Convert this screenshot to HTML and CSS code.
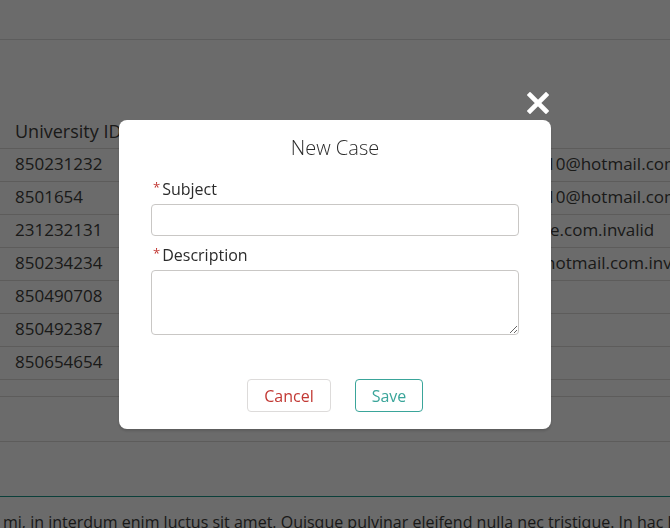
FILE: index.html
```html
<!DOCTYPE html>
<html lang="en">
<head>
<meta charset="utf-8">
<title>New Case</title>
<link rel="stylesheet" href="styles.css">
</head>
<body>
<div class="page">
  <header class="topbar"></header>
  <section class="records">
    <div class="row head">
      <div class="cell id">University ID</div>
      <div class="cell email"></div>
    </div>
    <div class="row"><div class="cell id">850231232</div><div class="cell email">10@hotmail.com</div></div>
    <div class="row"><div class="cell id">8501654</div><div class="cell email">10@hotmail.com</div></div>
    <div class="row"><div class="cell id">231232131</div><div class="cell email e3">e.com.invalid</div></div>
    <div class="row"><div class="cell id">850234234</div><div class="cell email e4">hotmail.com.invalid</div></div>
    <div class="row"><div class="cell id">850490708</div><div class="cell email"></div></div>
    <div class="row"><div class="cell id">850492387</div><div class="cell email"></div></div>
    <div class="row"><div class="cell id">850654654</div><div class="cell email"></div></div>
    <div class="spacer-row"></div>
    <div class="footer-row"></div>
  </section>
  <section class="article">
    <p class="para">mi, in interdum enim luctus sit amet. Quisque pulvinar eleifend nulla nec tristique. In hac habitasse platea dictumst.</p>
  </section>
</div>

<div class="overlay">
  <div class="modal">
    <button class="close" type="button" aria-label="Close">
      <svg width="22" height="22" viewBox="0 0 22 22"><path d="M3 3 L19 19 M19 3 L3 19" stroke="#fff" stroke-width="4.6" stroke-linecap="square" fill="none"/></svg>
    </button>
    <h2 class="title">New Case</h2>
    <div class="field">
      <label class="label"><span class="req">*</span>Subject</label>
      <input class="input" type="text">
    </div>
    <div class="field">
      <label class="label"><span class="req">*</span>Description</label>
      <textarea class="textarea"></textarea>
    </div>
    <div class="actions">
      <button class="btn cancel" type="button">Cancel</button>
      <button class="btn save" type="button">Save</button>
    </div>
  </div>
</div>
</body>
</html>
```

FILE: styles.css
```css
* { box-sizing: border-box; }
html, body { margin: 0; padding: 0; }
body {
  width: 670px;
  height: 528px;
  overflow: hidden;
  background: #fff;
  font-family: "Open Sans", "Liberation Sans", sans-serif;
  color: #3e3e3c;
}
.page { width: 670px; }
.topbar {
  height: 40px;
  border-bottom: 1px solid #dedede;
}
.records { padding-top: 76px; }
.row {
  display: flex;
  height: 33px;
  border-bottom: 1px solid #dddbda;
  align-items: center;
  font-size: 17px;
  line-height: 22px;
  white-space: nowrap;
}
.row .cell { padding-bottom: 3px; }
.row.head { font-size: 18px; }
.row.head .cell { padding-bottom: 2px; }
.cell.id { width: 546px; padding-left: 15px; }
.cell.email { flex: 1; overflow: hidden; }
.cell.e3 { padding-left: 4px; }
.cell.e4 { margin-left: -1px; }
.spacer-row { height: 17px; border-bottom: 1px solid #dddbda; }
.footer-row { height: 45px; border-bottom: 1px solid #dddbda; }
.article {
  margin-top: 54px;
  border-top: 1px solid #1c9a8a;
}
.para {
  margin: 0;
  padding: 14px 0 0 3px;
  font-size: 16px;
  line-height: 22px;
  white-space: nowrap;
  overflow: hidden;
}

.overlay {
  position: fixed;
  inset: 0;
  background: rgba(0, 0, 0, 0.58);
  display: flex;
  justify-content: center;
  align-items: flex-start;
  padding-top: 120px;
}
.modal {
  position: relative;
  width: 432px;
  background: #fff;
  border-radius: 8px;
  padding: 14px 32px 17px;
  box-shadow: 0 2px 3px rgba(0,0,0,0.16);
}
.close {
  position: absolute;
  top: -28px;
  right: 2px;
  width: 22px;
  height: 22px;
  padding: 0;
  border: 0;
  background: none;
  display: flex;
}
.title {
  margin: 0;
  text-align: center;
  font-weight: 300;
  font-size: 20px;
  line-height: 28px;
  color: #2b2b2b;
}
.field { display: flex; flex-direction: column; }
.field + .field { margin-top: 9px; }
.title + .field { margin-top: 17px; }
.label {
  font-size: 16px;
  line-height: 20px;
  height: 20px;
  margin-bottom: 5px;
  color: #2b2b2b;
  padding-left: 2px;
}
.req {
  color: #c23934;
  font-size: 13px;
  line-height: 0;
  margin-right: 2px;
  position: relative;
  top: -3px;
}
.input, .textarea {
  width: 368px;
  border: 1px solid #c9c7c5;
  border-radius: 4px;
  background: #fff;
  font-family: inherit;
  font-size: 15px;
  outline: none;
  margin: 0;
}
.input { height: 32px; display: block; }
.textarea { height: 65px; resize: vertical; display: block; }
.actions {
  display: flex;
  justify-content: center;
  gap: 24px;
  margin-top: 44px;
}
.btn {
  height: 33px;
  border-radius: 4px;
  background: #fff;
  font-family: inherit;
  font-size: 16px;
  padding: 0;
}
.cancel { width: 84px; border: 1px solid #dddbda; color: #c23934; }
.save { width: 68px; border: 1px solid #3aa59a; color: #3aa59a; }
```
